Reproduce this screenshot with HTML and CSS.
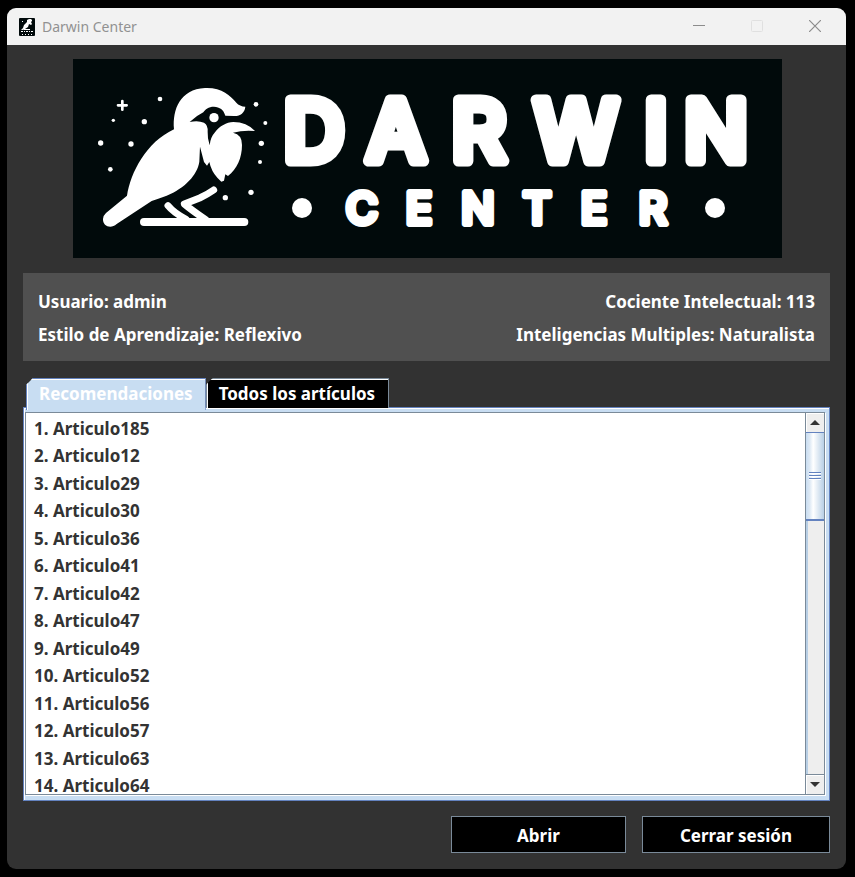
FILE: index.html
```html
<!DOCTYPE html>
<html lang="es">
<head>
<meta charset="utf-8">
<title>Darwin Center</title>
<link rel="stylesheet" href="styles.css">
</head>
<body>
<div class="window">
  <header class="titlebar">
    <svg class="app-icon" viewBox="0 0 16 18" aria-hidden="true">
      <rect width="16" height="18" rx="1" fill="#010a0b"/>
      <path d="M2 12 4 10 5 7 8 4V2l2-1h2l1 1v1l-1 1 1 2-1 1-2-1-1 3-3 2-2 1z" fill="#fff"/>
      <path d="M5 11.500h6M2 13.500h2m1 0h1m1 0h2m1 0h1m1 0h2M3 16.500h1m2 0h1m2 0h1m2 0h1M3 3.500h1" stroke="#fff"/>
    </svg>
    <span class="title">Darwin Center</span>
    <div class="controls">
      <button class="control" aria-label="Minimizar"><svg viewBox="0 0 12 12"><path d="M0 5.500h12" stroke="#8c8c8c"/></svg></button>
      <button class="control" aria-label="Maximizar" disabled><svg viewBox="0 0 12 12"><rect x=".5" y=".5" width="11" height="11" rx="1" fill="none" stroke="#e0e0e0"/></svg></button>
      <button class="control" aria-label="Cerrar"><svg viewBox="0 0 12 12"><path d="M0 0 12 12M12 0 0 12" stroke="#8c8c8c" stroke-width="1.200"/></svg></button>
    </div>
  </header>
  <main class="content">
    <svg class="logo" viewBox="0 0 709 199" role="img" aria-label="Darwin Center">
      <rect width="709" height="199" fill="#010a0b"/>
      <g transform="translate(7 11) scale(.33333)" fill="#fff">
        <path d="M282 178C277 118 300 58 375 54C425 52 450 76 469 98Q479 109 496 110C494 129 480 139 462 138L436 137C431 119 419 111 402 110C385 110 376 118 370 127Q348 138 329 156Q354 150 372 158Q385 166 383 186L384 205L389 226Q391 202 405 187C419 168 439 157 460 156Q500 156 525 183Q489 180 459 188Q487 194 486 225C486 264 471 297 444 318L436 313L432 332L424 335L412 323Q394 304 388 276L381 287L372 276L360 230L358 275C352 315 315 354 260 377Q235 386 215 393L110 462C93 478 68 469 69 447Q70 436 78 429L141 377C152 308 198 217 282 178Z"/>
        <circle cx="402" cy="143" r="14"/>
        <path d="M192 456H493" fill="none" stroke="#fff" stroke-width="24" stroke-linecap="round"/>
        <path d="M264 407Q281 428 318 448M401 360Q381 374 359 384L313 402Q337 422 377 449" fill="none" stroke="#fff" stroke-width="21" stroke-linecap="round" stroke-linejoin="round"/>
        <path d="M127 93v26M114 106h26" stroke="#fff" stroke-width="8" stroke-linecap="round"/>
        <circle cx="240" cy="87" r="7"/><circle cx="100" cy="151" r="5"/><circle cx="193" cy="155" r="8"/>
        <circle cx="62" cy="219" r="8"/><circle cx="153" cy="222" r="8"/><circle cx="91" cy="298" r="7"/>
        <circle cx="528" cy="103" r="7"/><circle cx="556" cy="159" r="6"/><circle cx="544" cy="220" r="8"/>
        <circle cx="540" cy="276" r="6"/><circle cx="513" cy="367" r="8"/><circle cx="436" cy="383" r="8"/>
      </g>
      <text class="logo-name" x="241 323 406 503 583 643" y="102">DARWIN</text>
      <circle cx="229" cy="149" r="10" fill="#fff"/>
      <text class="logo-sub" x="289 346 405 464 521 580" y="165">CENTER</text>
      <circle cx="642" cy="149" r="10" fill="#fff"/>
    </svg>

    <section class="profile">
      <span>Usuario: admin</span><span>Cociente Intelectual: 113</span>
      <span>Estilo de Aprendizaje: Reflexivo</span><span>Inteligencias Multiples: Naturalista</span>
    </section>

    <section class="articles">
      <div class="tabs" role="tablist">
        <button class="tab selected" role="tab" aria-selected="true">Recomendaciones</button>
        <button class="tab" role="tab" aria-selected="false">Todos los artículos</button>
      </div>
      <div class="pane" role="tabpanel">
        <div class="scroller">
          <ul class="list">
            <li>1. Articulo185</li><li>2. Articulo12</li><li>3. Articulo29</li><li>4. Articulo30</li>
            <li>5. Articulo36</li><li>6. Articulo41</li><li>7. Articulo42</li><li>8. Articulo47</li>
            <li>9. Articulo49</li><li>10. Articulo52</li><li>11. Articulo56</li><li>12. Articulo57</li>
            <li>13. Articulo63</li><li>14. Articulo64</li>
          </ul>
          <div class="scrollbar">
            <button class="arrow up" aria-label="Subir"><svg viewBox="0 0 10 5"><path d="M5 0 10 5H0z"/></svg></button>
            <div class="track"><div class="thumb"><i></i><i></i><i></i></div></div>
            <button class="arrow down" aria-label="Bajar"><svg viewBox="0 0 10 5"><path d="M0 0H10L5 5z"/></svg></button>
          </div>
        </div>
      </div>
    </section>

    <footer class="actions">
      <button class="action">Abrir</button>
      <button class="action">Cerrar sesión</button>
    </footer>
  </main>
</div>
</body>
</html>
```
FILE: styles.css
```css
* { box-sizing: border-box; }

body {
  margin: 0;
  height: 100vh;
  padding: 8px 9px 8px 7px;
  background: #000;
  font: bold 17px "Noto Sans", sans-serif;
  color: #fff;
}

button {
  margin: 0;
  padding: 0;
  border: 0;
  font: inherit;
  color: inherit;
}

.window {
  height: 100%;
  display: flex;
  flex-direction: column;
  background: #323232;
  border-radius: 9px;
  overflow: hidden;
}

.titlebar {
  display: flex;
  align-items: center;
  height: 37px;
  flex: none;
  padding: 0 2px 0 12px;
  background: #f2f2f2;
  color: #919191;
}

.app-icon { width: 16px; height: 18px; }

.title {
  margin-left: 7px;
  font-size: 14px;
  font-weight: 400;
}

.controls { display: flex; height: 100%; margin-left: auto; }

.control {
  display: grid;
  place-items: center;
  width: 58px;
  padding-bottom: 2px;
  background: none;
}

.control svg { width: 12px; height: 12px; }

.content {
  flex: 1;
  min-height: 0;
  display: flex;
  flex-direction: column;
  padding: 14px 16px 16px;
}

.logo {
  display: block;
  margin: 0 48px 15px 50px;
  flex: none;
}

.logo text {
  font-family: Inter, sans-serif;
  text-anchor: middle;
  fill: #fff;
  stroke: #fff;
  stroke-linejoin: round;
}

.logo .logo-name { font-size: 84px; font-weight: 500; stroke-width: 11px; }
.logo .logo-sub { font-size: 44px; font-weight: 500; stroke-width: 6px; }

.profile {
  display: grid;
  grid-template-columns: auto auto;
  justify-content: space-between;
  row-gap: 9px;
  padding: 17px 15px 14px;
  background: #505050;
  line-height: 24px;
}

.profile span:nth-child(even) { text-align: right; }

.articles {
  flex: 1;
  min-height: 0;
  display: flex;
  flex-direction: column;
  margin-top: 17px;
}

.tabs { display: flex; padding-left: 3px; }

.tab {
  height: 30px;
  padding: 0 13px 0 12px;
  background: #000;
  border: 1px solid #7a8a99;
  border-bottom: 0;
  box-shadow: inset 1px 1px #fff;
  clip-path: polygon(0 7px, 7px 0, 100% 0, 100% 100%, 0 100%);
}

.tab.selected {
  position: relative;
  margin-bottom: -2px;
  height: 32px;
  padding: 0 12px 2px;
  background: #c8ddf2;
  border-color: #6382bf;
}

.pane {
  flex: 1;
  min-height: 0;
  display: flex;
  margin-top: -1px;
  padding: 4px 4px 5px 1px;
  background: #c8ddf2;
  border: 1px solid #6382bf;
  box-shadow: inset 1px 1px #fff;
}

.scroller {
  flex: 1;
  min-width: 0;
  display: flex;
  background: #fff;
  border: 1px solid #7a8a99;
  box-shadow: 1px 1px #fff;
}

.list {
  flex: 1;
  margin: 0;
  padding: 2px 8px;
  overflow: hidden;
  list-style: none;
  color: #333;
}

.list li { height: 27px; line-height: 27px; }
.list li:nth-child(even) { height: 28px; }

.scrollbar {
  width: 19px;
  display: flex;
  flex-direction: column;
  border-left: 1px solid #7a8a99;
  background: #eee;
}

.arrow {
  display: grid;
  place-items: center;
  height: 19px;
  background: #eee;
  box-shadow: inset 1px 1px #fff;
}

.arrow.down { height: 20px; border-top: 1px solid #7a8a99; }
.arrow svg { width: 10px; height: 5px; fill: #333; }

.track { flex: 1; box-shadow: inset 2px 0 #b8cfe5; }

.thumb {
  height: 26%;
  display: flex;
  flex-direction: column;
  align-items: center;
  justify-content: center;
  gap: 1px;
  border-top: 1px solid #6382bf;
  border-bottom: 2px solid #6382bf;
  background: linear-gradient(90deg, #c8ddf2 0, #dce8f4 20%, #fff 40%, #b8cfe5 100%);
}

.thumb i {
  width: 12px;
  height: 2px;
  border-top: 1px solid #6382bf;
  background: #fff;
}

.actions {
  display: flex;
  justify-content: flex-end;
  gap: 16px;
  margin-top: 15px;
}

.action {
  height: 37px;
  padding: 2px 37px 0;
  background: #000;
  border: 1px solid #7a8a99;
}

.action:first-child { padding: 2px 65px 0; }
```
